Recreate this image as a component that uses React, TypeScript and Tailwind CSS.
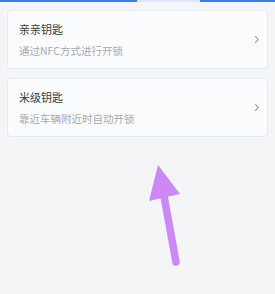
import React from 'react';

const keys = [
  { title: '亲亲钥匙', desc: '通过NFC方式进行开锁' },
  { title: '米级钥匙', desc: '靠近车辆附近时自动开锁' },
];

const Chevron = () => (
  <svg width="6" height="9" viewBox="0 0 6 9" fill="none">
    <path d="M1.5 1.5L4.3 4.5L1.5 7.5" stroke="#a0a5ad" strokeWidth="1.1" strokeLinecap="round" strokeLinejoin="round" />
  </svg>
);

export default function App() {
  return (
    <div
      className="relative w-[275px] h-[294px] bg-[#f4f5f7] overflow-hidden"
      style={{ fontFamily: '"Noto Sans CJK SC", "Noto Sans", sans-serif' }}
    >
      <div className="flex h-[2px]">
        <div className="w-[137px] bg-[#3d7cf0]" />
        <div className="w-[63px] bg-[#dce8fb]" />
        <div className="flex-1 bg-[#3d7cf0]" />
      </div>
      <div className="flex flex-col gap-[9px] px-[7px] pt-[8px]">
        {keys.map((k) => (
          <div
            key={k.title}
            className="flex items-center h-[59px] pl-[11px] pr-[7px] rounded-[4px] border border-[#e3e9f6] bg-[#fbfcfe]"
          >
            <div className="flex-1 flex flex-col gap-[8px] pt-[1px]">
              <div className="text-[11px] leading-[14px] text-[#3a3a3a]">{k.title}</div>
              <div className="text-[10.5px] leading-[14px] text-[#a6a9ae]">{k.desc}</div>
            </div>
            <Chevron />
          </div>
        ))}
      </div>
      <svg className="absolute left-0 top-0" width="275" height="294" viewBox="0 0 275 294">
        <polygon points="158,165 149,201 180,194" fill="#cc88f5" />
        <line x1="164" y1="196" x2="176" y2="262" stroke="#cc88f5" strokeWidth="7.5" strokeLinecap="round" />
      </svg>
    </div>
  );
}
